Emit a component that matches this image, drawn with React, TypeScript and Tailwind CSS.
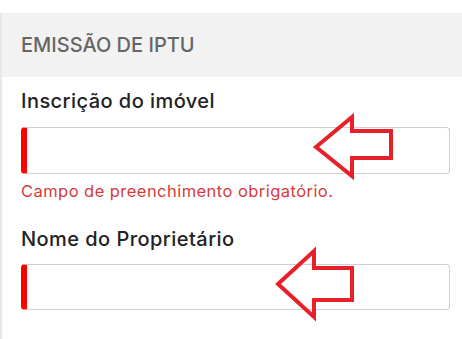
export default function App() {
  return (
    <div className="relative w-[462px] h-[339px] bg-white overflow-hidden font-['Inter','Noto_Sans',sans-serif]">
      <div className="mt-[13px] h-[326px] border-l-2 border-[#e8e8e8]">
        <div className="h-[64px] bg-[#f2f2f2] flex items-center pl-[19px]">
          <h2 className="text-[20px] font-medium text-[#666666]">EMISSÃO DE IPTU</h2>
        </div>
        <form className="pl-[19px] pr-[12px]">
          <label className="block mt-[10px] leading-[28px] text-[20px] tracking-[0.45px] font-medium text-[#222222]">
            Inscrição do imóvel
          </label>
          <input
            type="text"
            className="mt-[12px] block w-full h-[47px] rounded-[4px] border border-[#d0d0d0] border-l-[6px] border-l-[#ff0000] outline-none"
          />
          <p className="mt-[6px] leading-[22px] text-[16.5px] tracking-[0.45px] text-[#d33c3c]">
            Campo de preenchimento obrigatório.
          </p>
          <label className="block mt-[23px] leading-[28px] text-[20px] tracking-[0.45px] font-medium text-[#222222]">
            Nome do Proprietário
          </label>
          <input
            type="text"
            className="mt-[11px] block w-full h-[46px] rounded-[4px] border border-[#d0d0d0] border-l-[6px] border-l-[#ff0000] outline-none"
          />
        </form>
      </div>
      <svg className="absolute inset-0 pointer-events-none" width="462" height="339" viewBox="0 0 462 339">
        <polygon
          points="316,147 352,117 352,131 391,131 391,158 352,158 352,176"
          fill="none"
          stroke="#e8202a"
          strokeWidth="4"
          strokeLinejoin="miter"
        />
        <polygon
          points="278,284 314,251 314,268 352,268 352,300 314,300 314,317"
          fill="none"
          stroke="#e8202a"
          strokeWidth="4"
          strokeLinejoin="miter"
        />
      </svg>
    </div>
  );
}
